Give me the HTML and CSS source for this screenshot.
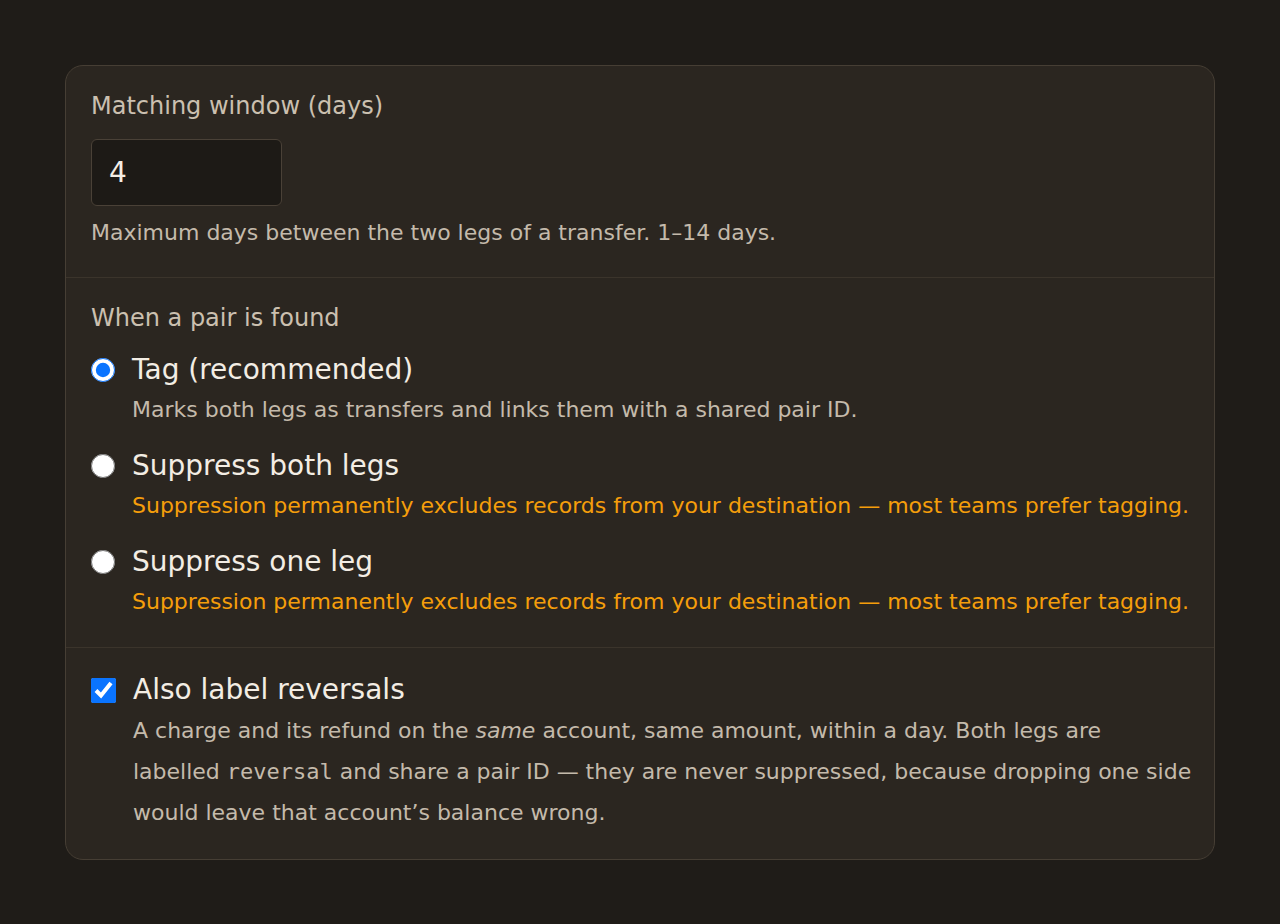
FILE: index.html
```html
<!DOCTYPE html>
<html lang="en">
<head>
  <meta charset="UTF-8">
  <meta name="viewport" content="width=device-width, initial-scale=1.0">
  <title>Transfer matching</title>
  <link rel="stylesheet" href="styles.css">
</head>
<body>
  <div class="panel">
    <section class="section section-window">
      <label class="field-label" for="window">Matching window (days)</label>
      <input class="num-input" type="text" id="window" value="4">
      <p class="help">Maximum days between the two legs of a transfer. 1–14 days.</p>
    </section>

    <section class="section section-action">
      <div class="field-label">When a pair is found</div>
      <label class="option">
        <input type="radio" name="action" value="tag" checked>
        <span class="option-body">
          <span class="option-title">Tag (recommended)</span>
          <span class="option-desc">Marks both legs as transfers and links them with a shared pair ID.</span>
        </span>
      </label>
      <label class="option">
        <input type="radio" name="action" value="suppress-both">
        <span class="option-body">
          <span class="option-title">Suppress both legs</span>
          <span class="option-desc warn">Suppression permanently excludes records from your destination — most teams prefer tagging.</span>
        </span>
      </label>
      <label class="option">
        <input type="radio" name="action" value="suppress-one">
        <span class="option-body">
          <span class="option-title">Suppress one leg</span>
          <span class="option-desc warn">Suppression permanently excludes records from your destination — most teams prefer tagging.</span>
        </span>
      </label>
    </section>

    <section class="section section-reversals">
      <label class="option">
        <input class="check" type="checkbox" name="reversals" checked>
        <span class="option-body">
          <span class="option-title">Also label reversals</span>
          <span class="option-desc long">A charge and its refund on the <em>same</em> account, same amount, within a day. Both legs are labelled <code>reversal</code> and share a pair ID — they are never suppressed, because dropping one side would leave that account’s balance wrong.</span>
        </span>
      </label>
    </section>
  </div>
</body>
</html>
```

FILE: styles.css
```css
body {
  font-family: "DejaVu Sans", sans-serif;
  background: #1f1c18;
  color: #c9bfb0;
  margin: 0;
  padding: 65px;
}
.panel {
  background: #2b2620;
  border: 1px solid #463e34;
  border-radius: 18px;
  overflow: hidden;
}
.section {
  padding: 22px 20px 23px 25px;
  border-top: 1px solid #3b342b;
}
.section:first-child {
  border-top: none;
}
.section-window {
  padding: 22px 20px 28px 25px;
}
.section-reversals {
  padding: 24px 22px 26px 25px;
}
.field-label {
  display: block;
  font-size: 24px;
  line-height: 36px;
  color: #cbc0b0;
}
.num-input {
  display: block;
  box-sizing: border-box;
  width: 191px;
  height: 67px;
  margin: 15px 0 11px;
  padding: 0 17px;
  background: #1d1a16;
  border: 1px solid #4a4137;
  border-radius: 6px;
  color: #f3ede4;
  font-family: inherit;
  font-size: 28px;
}
.help {
  margin: 0;
  font-size: 22px;
  line-height: 32px;
  color: #c4baab;
}
.option {
  display: flex;
  gap: 17px;
  margin-top: 16px;
  cursor: pointer;
}
.section-reversals .option {
  margin-top: 0;
}
.option input {
  flex: none;
  width: 24px;
  height: 24px;
  margin: 6px 0 0;
  accent-color: #0a74ff;
}
.option input.check {
  width: 25px;
  height: 25px;
}
.option-body {
  display: flex;
  flex-direction: column;
}
.option-title {
  font-size: 28px;
  line-height: 36px;
  color: #f3ede4;
}
.option-desc {
  font-size: 22px;
  line-height: 44px;
  color: #c4baab;
}
.option-desc.warn {
  color: #f59e0b;
}
.option-desc.long {
  line-height: 41px;
  margin-top: 2px;
}
code {
  font-family: "DejaVu Sans Mono", monospace;
  font-size: 1em;
}
```
